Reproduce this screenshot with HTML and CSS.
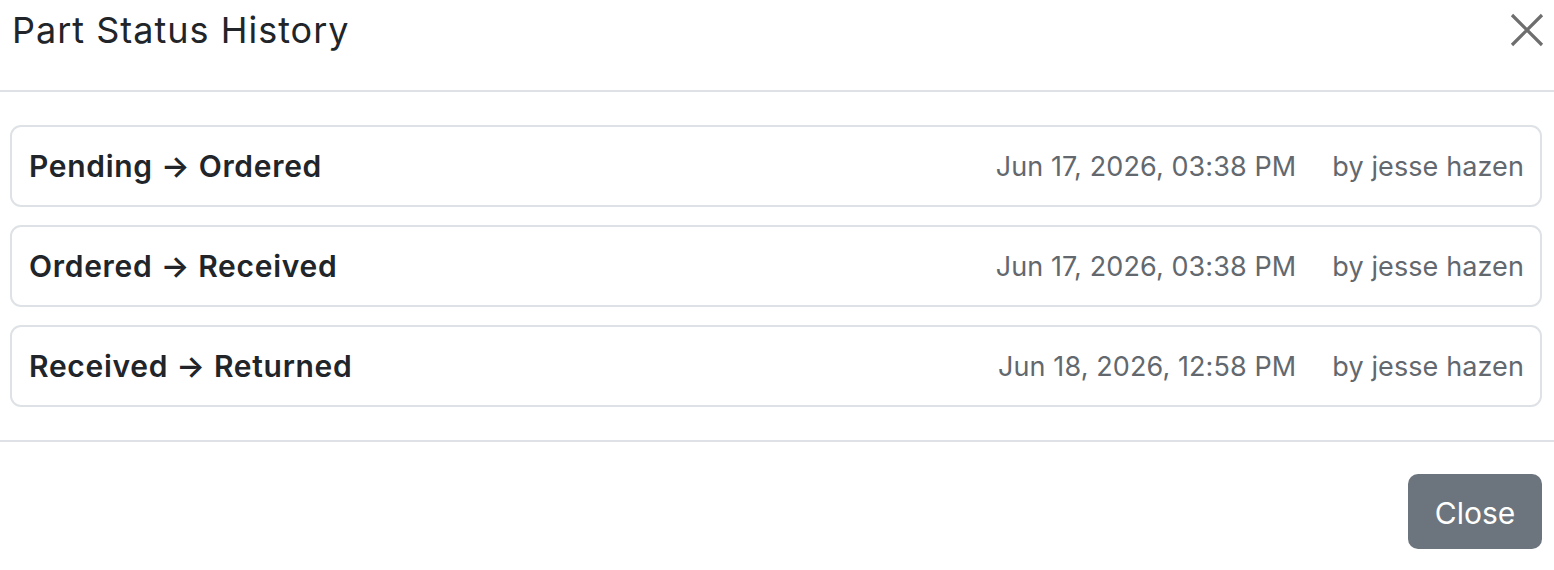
FILE: index.html
```html
<!DOCTYPE html>
<html lang="en">
<head>
	<meta charset="UTF-8">
	<title>Part Status History</title>
	<link rel="stylesheet" href="styles.css">
</head>
<body>
	<div class="modal">
		<div class="modal-header">
			<h5 class="modal-title">Part Status History</h5>
			<button class="btn-close" type="button" aria-label="Close">
				<svg width="34" height="34" viewBox="0 0 34 34"><path d="M2 2L32 32M32 2L2 32" stroke="#6e6e6e" stroke-width="3.2" fill="none"/></svg>
			</button>
		</div>
		<div class="modal-body">
			<div class="history-item">
				<span class="change">Pending &rarr; Ordered</span>
				<span class="meta">Jun 17, 2026, 03:38 PM</span>
				<span class="meta">by jesse hazen</span>
			</div>
			<div class="history-item">
				<span class="change">Ordered &rarr; Received</span>
				<span class="meta">Jun 17, 2026, 03:38 PM</span>
				<span class="meta">by jesse hazen</span>
			</div>
			<div class="history-item">
				<span class="change">Received &rarr; Returned</span>
				<span class="meta">Jun 18, 2026, 12:58 PM</span>
				<span class="meta">by jesse hazen</span>
			</div>
		</div>
		<div class="modal-footer">
			<button class="btn-secondary" type="button">Close</button>
		</div>
	</div>
</body>
</html>
```

FILE: styles.css
```css
* {
	margin: 0;
	padding: 0;
	box-sizing: border-box;
}

body {
	background-color: #ffffff;
	font-family: Inter, "Noto Sans", sans-serif;
	color: #212529;
}

/* header */
.modal-header {
	display: flex;
	align-items: center;
	justify-content: space-between;
	height: 92px;
	padding: 0 12px 0 12px;
	border-bottom: 2px solid #dee2e6;
}

.modal-title {
	font-size: 36px;
	font-weight: 400;
	line-height: 1;
	margin-top: -30px;
	letter-spacing: 1px;
}

.btn-close {
	display: flex;
	border: none;
	background: none;
	margin-top: -31px;
	margin-right: -2px;
	cursor: pointer;
}

/* body */
.modal-body {
	display: flex;
	flex-direction: column;
	gap: 18px;
	padding: 33px 12px 33px 10px;
}

.history-item {
	display: flex;
	align-items: center;
	gap: 36px;
	height: 82px;
	padding: 0 16px 0 17px;
	border: 2px solid #dee2e6;
	border-radius: 11px;
}

.change {
	flex: 1;
	font-size: 30px;
	font-weight: 600;
	letter-spacing: 0.7px;
}

.meta {
	font-size: 27px;
	letter-spacing: 0.1px;
	color: #62686e;
}

/* footer */
.modal-footer {
	display: flex;
	justify-content: flex-end;
	padding: 32px 12px 0 12px;
	border-top: 2px solid #dee2e6;
}

.btn-secondary {
	width: 134px;
	height: 75px;
	border: none;
	border-radius: 10px;
	background-color: #6c757d;
	color: #ffffff;
	font-family: Inter, "Noto Sans", sans-serif;
	font-size: 30px;
	padding-top: 2px;
	cursor: pointer;
}
```
